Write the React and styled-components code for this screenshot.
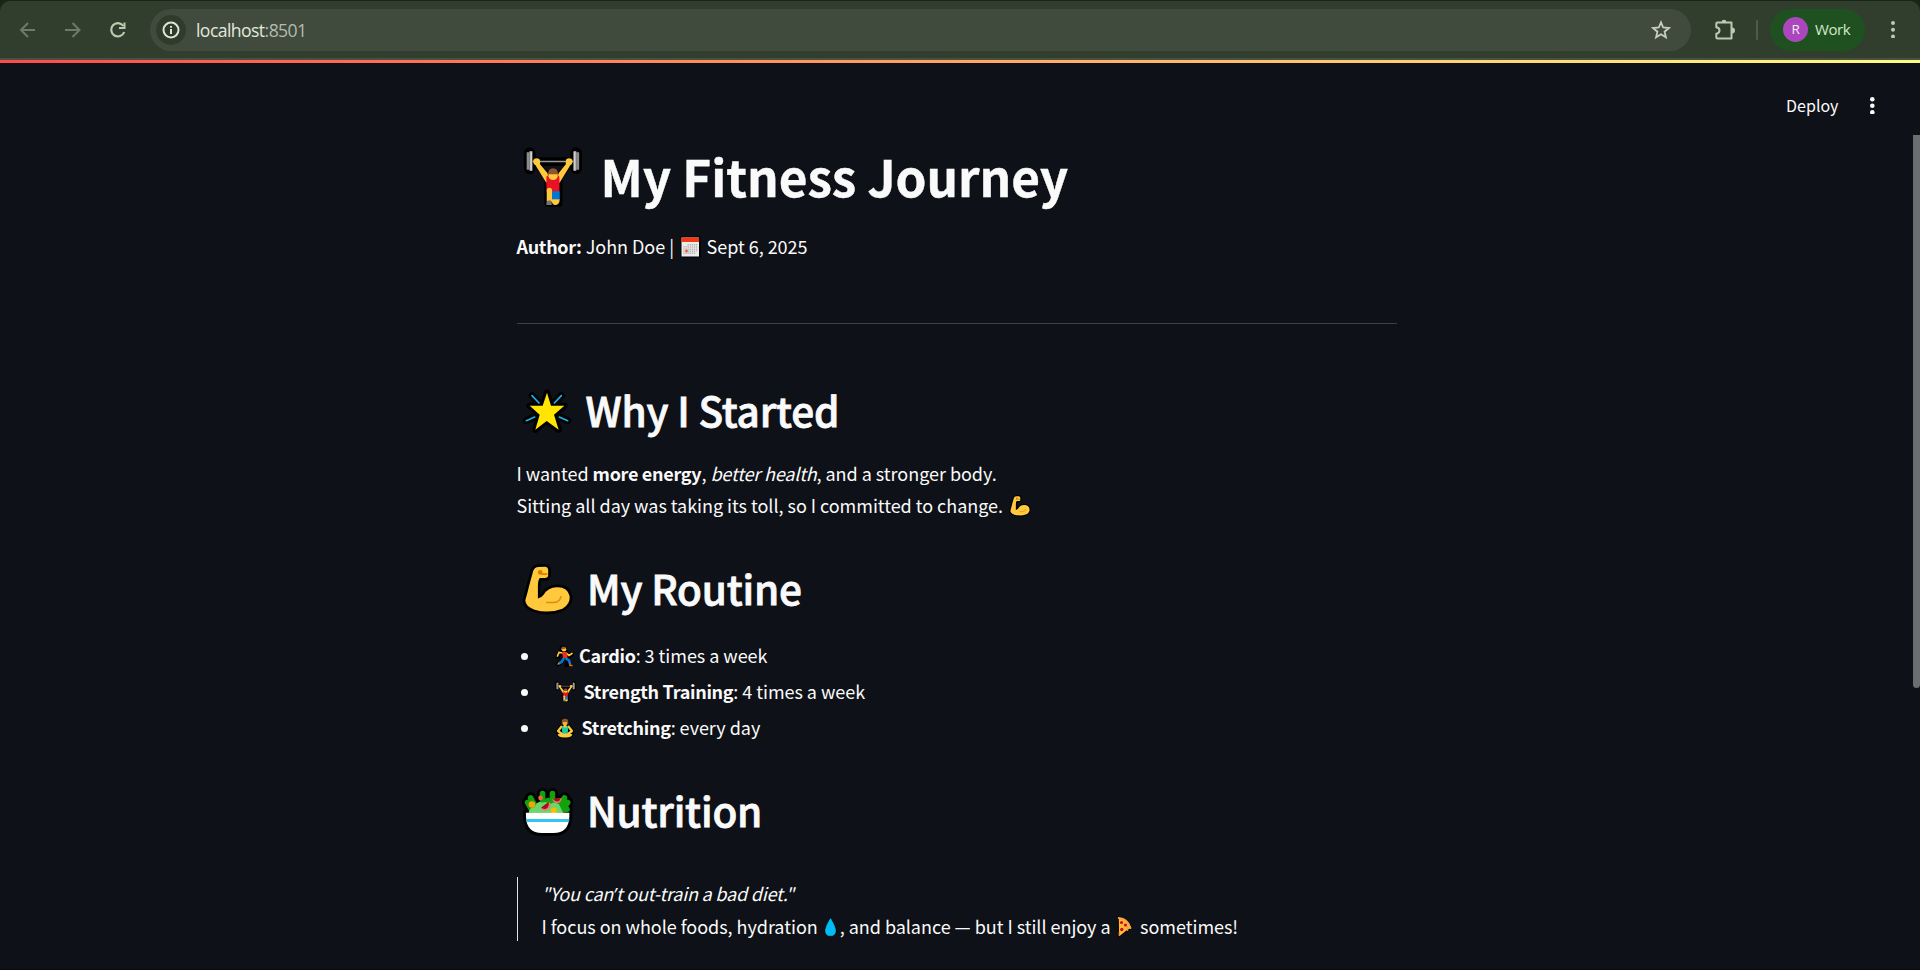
import React from "react";
import styled, { createGlobalStyle } from "styled-components";

const GlobalStyle = createGlobalStyle`
  *, *::before, *::after { box-sizing: border-box; }
  html, body { margin: 0; padding: 0; background: #0e1117; overflow: hidden; }
`;

const sans = `"Noto Sans CJK SC", "Source Sans 3", "Noto Sans", sans-serif`;
const chrome = `"Open Sans", "Noto Sans", sans-serif`;

const Window = styled.div`
  display: flex;
  flex-direction: column;
  width: 1920px;
  height: 970px;
  overflow: hidden;
  background: #0e1117;
  color: #fafafa;
  font-family: ${sans};
  border-bottom: 1px solid #07090d;
`;

/* browser chrome */
const TabStrip = styled.div`
  background: #182517;
  padding-top: 1px;
`;
const Toolbar = styled.div`
  display: flex;
  align-items: center;
  height: 57px;
  padding: 0 18px 0 17px;
  background: #313d2d;
  border-radius: 10px 10px 0 0;
`;
const NavButton = styled.div`
  display: flex;
  flex: none;
  width: 22px;
  height: 22px;
  margin-right: ${(p) => p.$gap}px;
  color: ${(p) => (p.$disabled ? "#6c7a66" : "#b7ccb0")};
`;
const AddressBar = styled.div`
  display: flex;
  align-items: center;
  width: 1541px;
  height: 42px;
  padding: 0 20px 0 6px;
  border-radius: 21px;
  background: #404b3d;
`;
const SiteInfo = styled.div`
  display: grid;
  place-items: center;
  width: 30px;
  height: 30px;
  border-radius: 50%;
  background: #2f3b2b;
  color: #dde6d6;
`;
const Url = styled.div`
  flex: 1;
  padding-left: 10px;
  font: 400 17.6px/26px ${chrome};
  letter-spacing: -0.57px;
  color: #e2e8dc;
  white-space: pre;
`;
const Port = styled.span`
  color: #b3bcae;
`;
const ToolIcon = styled.div`
  display: flex;
  flex: none;
  color: ${(p) => p.$color};
  margin-left: ${(p) => p.$left || 0}px;
`;
const Divider = styled.div`
  width: 2px;
  height: 20px;
  margin-left: 20px;
  border-radius: 1px;
  background: #4a5f45;
`;
const Profile = styled.div`
  display: flex;
  align-items: center;
  gap: 7px;
  width: 95px;
  height: 42px;
  margin-left: 12px;
  padding: 0 0 1px 13px;
  border-radius: 21px;
  background: #1f5120;
  color: #d5e8cd;
  font: 400 15px/24px ${chrome};
  letter-spacing: -0.45px;
`;
const Avatar = styled.div`
  display: grid;
  place-items: center;
  width: 25px;
  height: 25px;
  border-radius: 50%;
  background: #ab47bc;
  color: #f7e9fa;
  font-size: 13.5px;
  line-height: 25px;
`;
const ToolbarEdge = styled.div`
  height: 2px;
  background: #465043;
`;
const Decoration = styled.div`
  height: 3px;
  background: linear-gradient(90deg, #ff4b4b, #fffd80);
`;

/* app */
const AppHeader = styled.header`
  display: flex;
  flex: none;
  align-items: center;
  justify-content: flex-end;
  gap: 32px;
  height: 72px;
  padding: 13px 45px 0 0;
`;
const Deploy = styled.span`
  font-size: 16px;
  line-height: 24px;
  margin-top: -2px;
`;
const Scroller = styled.div`
  display: flex;
  flex: 1;
  min-height: 0;
`;
const Page = styled.main`
  flex: 1;
  display: flex;
  flex-direction: column;
  align-items: center;
  padding-top: 8px;
`;
const Column = styled.article`
  width: 880px;
`;
const Track = styled.div`
  width: 7px;
`;
const Thumb = styled.div`
  height: 553px;
  background: #6c6d71;
  border-radius: 0 0 4px 4px;
`;
const Title = styled.h1`
  margin: 0;
  height: 66px;
  font-size: 49.5px;
  line-height: 66px;
  font-weight: 700;
  letter-spacing: -0.04px;
  -webkit-text-stroke: 0.4px #fafafa;
  white-space: pre;
`;
const Heading = styled.h2`
  margin: ${(p) => p.$top}px 0 0;
  height: 54px;
  font-size: 40.5px;
  line-height: 54px;
  font-weight: 500;
  letter-spacing: -0.2px;
  -webkit-text-stroke: 0.8px #fafafa;
  white-space: pre;
`;
const Text = styled.p`
  margin: ${(p) => p.$top || 0}px 0 0;
  font-size: 18px;
  line-height: 32px;
  letter-spacing: -0.03px;
  white-space: pre;
`;
const Strong = styled.strong`
  font-weight: 700;
  letter-spacing: -0.3px;
`;
const Em = styled.em`
  letter-spacing: ${(p) => p.$spacing || -0.17}px;
`;
const Apostrophe = styled.span`
  font-family: "Open Sans", sans-serif;
`;
const Rule = styled.hr`
  height: 1px;
  margin: 61px 0 0;
  border: 0;
  background: #3e4045;
`;
const List = styled.ul`
  display: flex;
  flex-direction: column;
  gap: 4px;
  margin: 24px 0 0;
  padding: 0 0 0 4.5px;
  list-style: none;
`;
const Item = styled.li`
  display: flex;
  align-items: center;
  height: 32px;
`;
const Bullet = styled.span`
  width: 7px;
  height: 7px;
  margin: 3px 27px 0 0;
  border-radius: 50%;
  background: #fafafa;
`;
const Quote = styled.blockquote`
  margin: 41px 0 0;
  padding-left: 24px;
  border-left: 1px solid #e4e5e8;
`;
const QuoteText = styled(Text)`
  height: 64px;
  margin-top: -1px;
  margin-bottom: 1px;
`;

/* A zero-height inline slot keeps the glyph from changing the line's height */
const Slot = styled.span`
  display: inline-block;
  width: ${(p) => p.$w}px;
  height: 0;
  margin: 0 ${(p) => p.$after}px 0 ${(p) => p.$before}px;
  svg {
    display: block;
    width: ${(p) => p.$w}px;
    height: ${(p) => p.$h}px;
    margin-top: ${(p) => p.$drop - p.$h}px;
    -webkit-text-stroke: 0;
  }
`;

function Emoji({ w, h, drop, before = 0, after = 0, box, outline, border = 16, children }) {
  return (
    <Slot $w={w} $h={h} $drop={drop} $before={before} $after={after}>
      <svg viewBox={box} preserveAspectRatio="none" aria-hidden="true">
        <g fill="#000" stroke="#000" strokeWidth={border} strokeLinejoin="round" strokeLinecap="round">
          {outline}
        </g>
        {children}
      </svg>
    </Slot>
  );
}

function Lifter(props) {
  return (
    <Emoji
      {...props}
      box="25 20 178 186"
      border={18}
      outline={
        <>
          <path d="M45 38V84M184 38V84" strokeWidth="35" />
          <path d="M50 64H180" strokeWidth="26" />
          <path d="M62 66L98 112V190H134V112L168 66L140 100H90Z" />
        </>
      }
    >
      <path d="M54 63.500H176" stroke="#9a9a9a" strokeWidth="5" />
      <path d="M41 36V88M188 36V88" stroke="#8c8c8c" strokeWidth="10" />
      <path d="M49 33V91M180 33V91" stroke="#d0d0d0" strokeWidth="8" />
      <path d="M45 33V90M184 33V90" stroke="#6f6f6f" strokeWidth="2.500" />
      <path d="M56 58L75 58L76 72L98 98L104 116L95 128L62 74Z" fill="#ffc83d" />
      <path d="M173 58L154 58L153 72L132 98L125 116L134 128L167 74Z" fill="#ffc83d" />
      <circle cx="66" cy="64" r="10" fill="#ffc83d" />
      <circle cx="163" cy="64" r="10" fill="#ffc83d" />
      <path d="M95 112Q95 105 103 105H127Q134 105 134 112V155H95Z" fill="#e81224" />
      <path d="M101 101H129V108Q127 119 115 119Q103 119 101 108Z" fill="#ffc83d" />
      <path d="M100 102Q100 84 115 84Q130 84 130 102Z" fill="#8e562e" />
      <path d="M112 153H135V178H112Z" fill="#0078d7" />
      <path d="M111 177H135Q134 194 123 194Q114 194 111 184Z" fill="#ffc83d" />
      <path d="M96 151Q96 142 104 142Q112 142 112 151V184H96Z" fill="#ffc83d" />
      <path d="M95 194V188Q96 180 103 180Q111 180 111 188V194Z" fill="#747474" />
    </Emoji>
  );
}

const armShape =
  "M84 62Q88 52 100 51L119 50Q129 51 129 60V78Q127 84 119 84H104Q98 90 98 108V145Q110 142 116 133Q128 112 155 111Q188 110 194 138Q196 162 172 175Q130 191 88 178Q60 168 60 150Q66 130 72 105Z";

function Biceps(props) {
  return (
    <Emoji {...props} box="50 42 154 152" outline={<path d={armShape} />}>
      <path d={armShape} fill="#ffc83d" />
      <path d="M108 72H127" stroke="#d67d00" strokeWidth="5" fill="none" />
      <circle cx="105" cy="67" r="7" fill="#d67d00" />
      <path d="M123 157H146Q165 156 168 138" fill="none" stroke="#d68f10" strokeWidth="4.500" />
    </Emoji>
  );
}

const starShape = "M95 38L107 77H147L116 104L130 149L94 123L60 149L73 104L43 77H82Z";

function Star(props) {
  return (
    <Emoji
      {...props}
      box="20 15 150 150"
      border={19}
      outline={
        <>
          <path d={starShape} />
          <path d="M50 47L70 68M138 47L118 68M33 122L58 111M157 122L132 111" strokeWidth="21" />
        </>
      }
    >
      <path d="M50 47L71 69M138 47L117 69M33 122L58 111M157 122L132 111" stroke="#1cb4ec" strokeWidth="5" strokeLinecap="round" />
      <path d={starShape} fill="#ffe500" />
    </Emoji>
  );
}

const greens = "M112 128V71M142 128V71M100 128L76 84M125 128L128 92M150 128L178 84M82 124L67 98M168 124L188 98M165 120L186 118";

function Salad(props) {
  return (
    <Emoji
      {...props}
      box="50 48 154 154"
      border={18}
      outline={
        <>
          <path d="M62 129H193V140Q190 190 145 190H110Q65 190 62 140Z" />
          <path d={greens} strokeWidth="34" />
        </>
      }
    >
      <path d={greens} stroke="#13a10e" strokeWidth="17" strokeLinecap="round" />
      <path d="M70 129Q72 112 88 112Q96 92 111 98Q126 92 132 104Q150 92 162 104Q168 116 174 129Z" fill="#6bd66a" />
      <circle cx="80" cy="104" r="10" fill="#f7a308" />
      <circle cx="106" cy="84" r="7" fill="#f7653f" />
      <circle cx="146" cy="122" r="9" fill="#ffb900" />
      <path d="M134 96Q142 114 124 122Q112 124 106 116Z" fill="#f4786c" />
      <path d="M130 96Q134 110 122 117Q112 119 108 113Z" fill="#a4101c" />
      <path d="M141 88L170 84Q168 99 157 100Q146 100 141 88Z" fill="#f4786c" />
      <path d="M144 87L167 84Q164 94 157 95Q149 95 144 87Z" fill="#a4101c" />
      <path d="M62 129H193V140Q191 190 145 190H110Q64 190 62 140Z" fill="#fff" />
      <path d="M62 148H193L192 157H63Z" fill="#31c5f0" />
    </Emoji>
  );
}

function Calendar(props) {
  const cols = [0, 1, 2, 3, 4, 5, 6];
  return (
    <Emoji {...props} box="0 0 21 22" border={2} outline={<rect x="1.500" y="1.500" width="18" height="19" />}>
      <rect x="1.500" y="1.500" width="17.500" height="19" fill="#ececec" />
      <rect x="1.500" y="1.500" width="17.500" height="4.500" fill="#f03a17" />
      {cols.map((c) => (
        <path key={c} d={`M${4 + c * 2.100} ${c < 2 ? 10 : 8}V${c > 5 ? 15.500 : 18}`} stroke="#b4b4b4" strokeWidth="1.300" strokeDasharray="1.600 .6" />
      ))}
      <path d="M6.500 13.500V16.500M5 15H8" stroke="#f0604a" strokeWidth="1.500" />
    </Emoji>
  );
}

function Runner(props) {
  const body = "M9 7L10 13L13 16L12 20H15M9 13L6 17L3 19M8 8L4 9L3 12M11 8L14 11L17 9";
  return (
    <Emoji {...props} box="0 0 19 22" border={4.500} outline={<><path d={body} fill="none" /><circle cx="8" cy="4" r="1.500" /></>}>
      <path d="M8 8L4 7.500L2.500 11M11 8L14 10.500L17 8.500" stroke="#ffc83d" strokeWidth="1.700" fill="none" strokeLinecap="round" />
      <path d="M9 13L6.500 17L3.500 18.500M10.500 13L14 15.500L15 19" stroke="#0078d7" strokeWidth="2.600" fill="none" />
      <path d="M4.500 18L2.500 19.500M15 18.500V20.500H17.500" stroke="#e07a20" strokeWidth="1.500" fill="none" />
      <path d="M7 7H12L12.500 13H8Z" fill="#e8321e" />
      <circle cx="9" cy="4.200" r="2.300" fill="#ffc83d" />
      <path d="M6 5Q5.500 1.500 8.500 1.500Q11 1.500 11 3.500L8 4Z" fill="#8e562e" />
    </Emoji>
  );
}

function Yogi(props) {
  return (
    <Emoji
      {...props}
      box="0 0 20 22"
      border={3}
      outline={<path d="M10 2Q7 3 7 8L2.500 14L3 17L6 20H14L17 17L17.500 14L13 8Q13 3 10 2Z" />}
    >
      <path d="M7 9L3 14L7 17M13 9L17 14L13 17" stroke="#ffc83d" strokeWidth="2.200" fill="none" strokeLinejoin="round" />
      <path d="M2.500 17.500Q10 13.500 17.500 17.500Q16 21 10 20.500Q4 21 2.500 17.500Z" fill="#ffc83d" />
      <path d="M6.800 9H13.200L12.800 16.500H7.200Z" fill="#1fc8a0" />
      <path d="M8.500 8H11.500V10.500H8.500Z" fill="#ffc83d" />
      <path d="M6.700 7.500V4Q7 1.500 10 1.500Q13 1.500 13.300 4V7.500Z" fill="#8e562e" />
      <path d="M8 5H12V7.500Q10 9.500 8 7.500Z" fill="#f0b23a" />
    </Emoji>
  );
}

function Drop(props) {
  const d = "M7.500 2.500Q12.500 11 12.500 14.500Q12.500 19.800 7.500 19.800Q2.500 19.800 2.500 14.500Q2.500 11 7.500 2.500Z";
  return (
    <Emoji {...props} box="0 0 15 22" border={2.200} outline={<path d={d} />}>
      <path d={d} fill="#00bcf2" stroke="#00bcf2" strokeWidth=".8" />
    </Emoji>
  );
}

function Pizza(props) {
  const d = "M1.800 1.800Q11 2.500 14 12L10 14L2 20.500Z";
  return (
    <Emoji {...props} box="0 0 16 22" border={2.200} outline={<path d={d} />}>
      <path d={d} fill="#ffb93a" />
      <path d="M1.800 2Q11 3 13.500 12" fill="none" stroke="#f7a04a" strokeWidth="2" strokeLinecap="round" />
      <path d="M10.500 10V15M2.300 16V20" stroke="#f7903a" strokeWidth="1.300" />
      <circle cx="4.500" cy="6.500" r="1.600" fill="#c50f1f" />
      <circle cx="8.500" cy="9" r="1.600" fill="#c50f1f" />
      <circle cx="4.800" cy="13.500" r="1.700" fill="#c50f1f" />
    </Emoji>
  );
}

function Icon({ w, h, box, width = 2, children }) {
  return (
    <svg width={w} height={h} viewBox={box || `0 0 ${w} ${h}`} fill="none" stroke="currentColor" strokeWidth={width}>
      {children}
    </svg>
  );
}

function Dots({ r, gap }) {
  const mid = gap + r;
  return (
    <svg width={r * 2} height={mid * 2} fill="currentColor">
      <circle cx={r} cy={r} r={r} />
      <circle cx={r} cy={mid} r={r} />
      <circle cx={r} cy={mid + gap} r={r} />
    </svg>
  );
}

export default function App() {
  return (
    <Window>
      <GlobalStyle />
      <TabStrip>
        <Toolbar>
          <NavButton $gap={23} $disabled>
            <Icon w={22} h={22}><path d="M18 11H4.500M11 4L4 11L11 18" /></Icon>
          </NavButton>
          <NavButton $gap={23} $disabled>
            <Icon w={22} h={22}><path d="M3 11H16.500M10.500 4L17.500 11L10.500 18" /></Icon>
          </NavButton>
          <NavButton $gap={21}>
            <Icon w={22} h={22}>
              <path d="M16.300 6.800A6.700 6.700 0 1 0 17.200 13" strokeWidth="2.200" />
              <path d="M17.500 3.500V9H12" strokeWidth="2" />
            </Icon>
          </NavButton>
          <AddressBar>
            <SiteInfo>
              <Icon w={18} h={18}>
                <circle cx="9" cy="9" r="7.500" />
                <path d="M9 8V13M9 5V6.800" />
              </Icon>
            </SiteInfo>
            <Url>localhost<Port>:8501</Port></Url>
            <ToolIcon $color="#c6cec0">
              <Icon w={20} h={20} width={1.800}>
                <path d="M10 2.300L12.200 7.500L17.900 8L13.600 11.700L14.900 17.300L10 14.300L5.100 17.300L6.400 11.700L2.100 8L7.800 7.500Z" />
              </Icon>
            </ToolIcon>
          </AddressBar>
          <ToolIcon $color="#b7ccb0" $left={23}>
            <Icon w={22} h={22}>
              <path d="M3.500 3.500H17.500V19.500H3.500Q2.300 19.500 2.300 18.500V14.700Q5.500 14.200 5.500 11.500Q5.500 8.800 2.300 8.300V4.700Q2.300 3.500 3.500 3.500Z" strokeLinejoin="round" />
              <path d="M7.800 3A2.200 2.200 0 0 1 12.200 3ZM18 9.300A2.200 2.200 0 0 1 18 13.700Z" fill="currentColor" stroke="none" />
              <path d="M8.500 3A1.600 1.600 0 0 1 11.500 3M18 9.500A1.600 1.600 0 0 1 18 13.500" />
            </Icon>
          </ToolIcon>
          <Divider />
          <Profile><Avatar>R</Avatar>Work</Profile>
          <ToolIcon $color="#b7ccb0" $left={25.5}><Dots r={2} gap={6.700} /></ToolIcon>
        </Toolbar>
        <ToolbarEdge />
      </TabStrip>
      <Decoration />
      <AppHeader>
        <Deploy>Deploy</Deploy>
        <Dots r={2.300} gap={6.500} />
      </AppHeader>
      <Scroller>
        <Page>
          <Column>
            <Title><Lifter w={59.5} h={62} drop={12} before={6.5} after={18} />My Fitness Journey</Title>
            <Text $top={21}>
              <Strong>Author:</Strong> John Doe | <Calendar w={21} h={22} drop={4} before={1.5} after={2} /> Sept 6, 2025
            </Text>
            <Rule />
            <Heading $top={59}><Star w={50} h={50} drop={8} before={5} after={14} />Why I Started</Heading>
            <Text $top={20}>
              I wanted <Strong>more energy</Strong>, <Em>better health</Em>, and a stronger body.{"\n"}
              Sitting all day was taking its toll, so I committed to change. <Biceps w={22} h={22} drop={4} before={2} />
            </Text>
            <Heading $top={40}><Biceps w={51} h={51} drop={10} before={5} after={14.5} />My Routine</Heading>
            <List>
              <Item>
                <Bullet />
                <Text><Runner w={19} h={22} drop={4} after={5} /><Strong>Cardio</Strong>: 3 times a week</Text>
              </Item>
              <Item>
                <Bullet />
                <Text><Lifter w={21} h={22} drop={4} after={7.5} /><Strong>Strength Training</Strong>: 4 times a week</Text>
              </Item>
              <Item>
                <Bullet />
                <Text><Yogi w={20} h={22} drop={4} after={6.5} /><Strong>Stretching</Strong>: every day</Text>
              </Item>
            </List>
            <Heading $top={40}><Salad w={51} h={51} drop={10} before={5} after={14.5} />Nutrition</Heading>
            <Quote>
              <QuoteText>
                <Em $spacing={-0.2}>"You can<Apostrophe>’</Apostrophe>t out-train a bad diet."</Em>{"\n"}
                I focus on whole foods, hydration <Drop w={15} h={22} drop={4} before={1} after={2} />, and balance — but I still enjoy a <Pizza w={16} h={22} drop={4} before={2} after={3.5} /> sometimes!
              </QuoteText>
            </Quote>
          </Column>
        </Page>
        <Track><Thumb /></Track>
      </Scroller>
    </Window>
  );
}
